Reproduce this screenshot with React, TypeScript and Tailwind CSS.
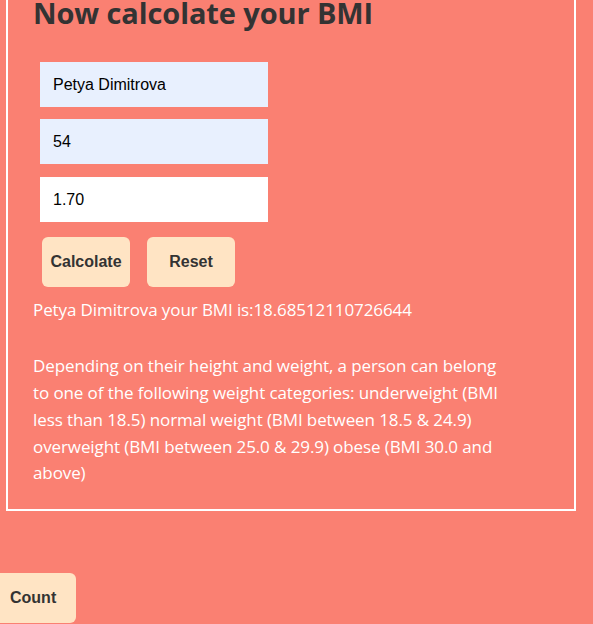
import { useState } from "react";

const App = () => {
  const [name, setName] = useState("Petya Dimitrova");
  const [weight, setWeight] = useState("54");
  const [height, setHeight] = useState("1.70");

  const bmi = 18.68512110726644;

  return (
    <div className="bg-[#fa8072] h-[624px] w-full overflow-hidden font-['Open_Sans',sans-serif]">
      <div className="ml-[6px] w-[570px] border-2 border-white -mt-[2px] pl-[25px] pb-[22px]">
        <h1 className="text-[29px] leading-[40px] font-bold text-[#333] -mt-[7px] tracking-[-0.1px]">
          Now calcolate your BMI
        </h1>

        <form className="flex flex-col gap-[12px] mt-[29px] ml-[7px] w-[228px]">
          <input
            value={name}
            onChange={(e) => setName(e.target.value)}
            className="h-[45px] bg-[#e8f0fe] px-[13px] text-[16px] text-black font-['Liberation_Sans',Arial,sans-serif] outline-none"
          />
          <input
            value={weight}
            onChange={(e) => setWeight(e.target.value)}
            className="h-[45px] bg-[#e8f0fe] px-[13px] text-[16px] text-black font-['Liberation_Sans',Arial,sans-serif] outline-none"
          />
          <input
            value={height}
            onChange={(e) => setHeight(e.target.value)}
            className="h-[45px] mt-[1px] bg-white px-[13px] text-[16px] text-black font-['Liberation_Sans',Arial,sans-serif] outline-none"
          />
        </form>

        <div className="flex gap-[17px] mt-[15px] ml-[9px]">
          <button className="w-[88px] h-[50px] rounded-[6px] bg-[#ffe4c4] text-[#333] font-bold text-[16px] font-['Liberation_Sans',Arial,sans-serif]">
            Calcolate
          </button>
          <button className="w-[88px] h-[50px] rounded-[6px] bg-[#ffe4c4] text-[#333] font-bold text-[16px] font-['Liberation_Sans',Arial,sans-serif]">
            Reset
          </button>
        </div>

        <div className="text-white text-[17px] leading-[26.7px] tracking-[-0.1px] mt-[10px] w-[475px]">
          <p>
            {name} your BMI is:{bmi}
          </p>
          <br />
          <p className="mt-[3px]">
            Depending on their height and weight, a person can belong to one of
            the following weight categories: underweight (BMI less than 18.5)
            normal weight (BMI between 18.5 &amp; 24.9) overweight (BMI between
            25.0 &amp; 29.9) obese (BMI 30.0 and above)
          </p>
        </div>
      </div>

      <button className="mt-[62px] w-[76px] h-[50px] rounded-r-[6px] bg-[#ffe4c4] text-[#333] font-bold text-[16px] text-left pl-[10px] font-['Liberation_Sans',Arial,sans-serif]">
        Count
      </button>
    </div>
  );
};

export default App;
